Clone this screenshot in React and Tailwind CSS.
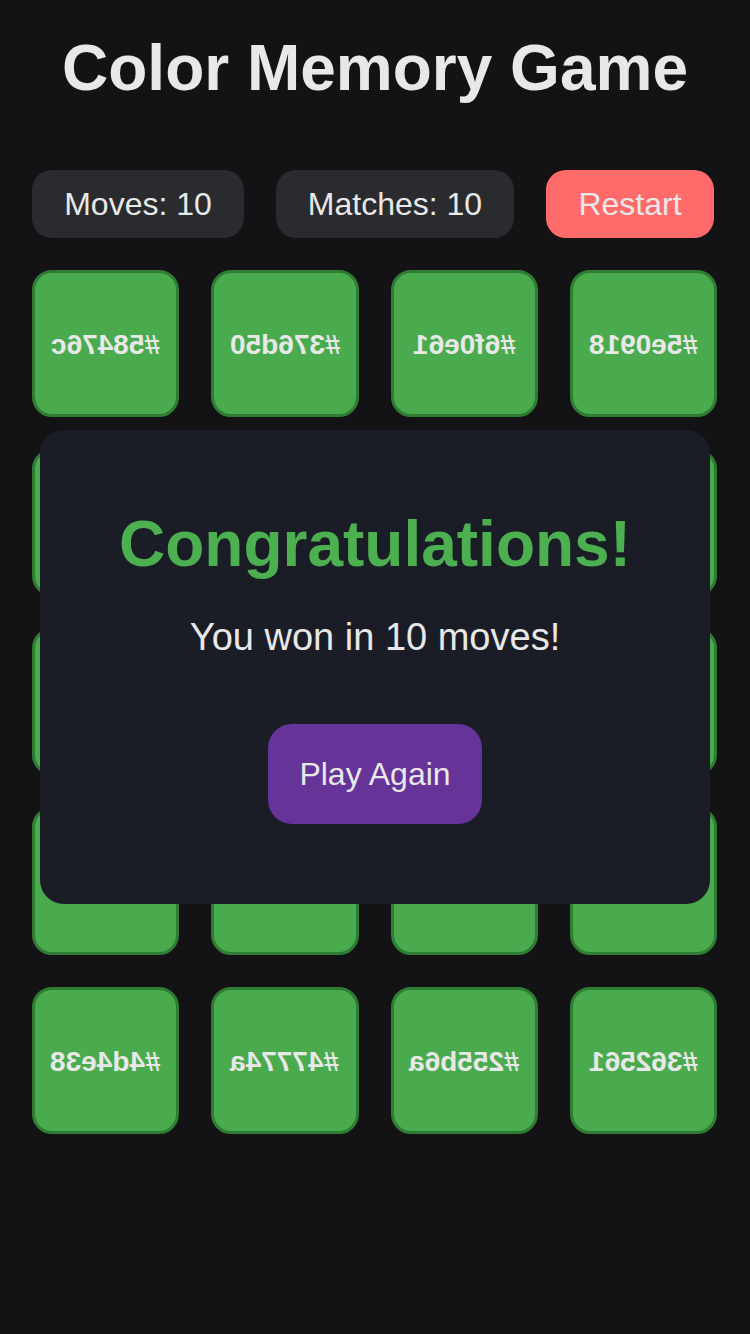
import React from 'react';

// rows 2-4 sit under the win modal, their faces are not visible
const cards = [
    '#58476c', '#376d50', '#6f0e61', '#5e0918',
    '', '', '', '',
    '', '', '', '',
    '', '', '', '',
    '#4d4e38', '#47774a', '#255b6a', '#362561',
];

const Card = ({ label }) => (
    <div className="aspect-square rounded-[20px] bg-[#4aab4e] border-[3px] border-[#2f7d33] flex items-center justify-center">
        {label && <span className="mt-[3px] text-[28px] font-bold text-[#e8e8e8] -scale-x-100">{label}</span>}
    </div>
);

const App = () => {
    return (
        <div className="min-h-screen bg-[#131316] text-[#e8e8e8] font-['Liberation_Sans',Arial,sans-serif] flex flex-col">
            {/* Title */}
            <h1 className="pt-[32px] text-center text-[64px] font-bold leading-[1.15]">Color Memory Game</h1>

            {/* Stats */}
            <div className="mt-[64px] px-8 flex gap-8">
                <div className="w-[212px] h-[68px] rounded-[20px] bg-[#2a2b2e] flex items-center justify-center text-[32px]">Moves: 10</div>
                <div className="w-[238px] h-[68px] rounded-[20px] bg-[#2a2b2e] flex items-center justify-center text-[32px]">Matches: 10</div>
                <button className="w-[168px] h-[68px] rounded-[20px] bg-[#ff6b6b] flex items-center justify-center text-[32px] text-[#e8e8e8]">Restart</button>
            </div>

            {/* Board */}
            <div className="mt-8 mx-8 w-[685px] grid grid-cols-4 gap-8">
                {cards.map((c, i) => (
                    <Card key={i} label={c} />
                ))}
            </div>

            {/* Win modal */}
            <div className="fixed inset-0 flex items-center justify-center">
                <div className="w-[670px] h-[474px] rounded-[24px] bg-[#1b1d26] flex flex-col items-center pt-[78px]">
                    <h2 className="text-[64px] font-bold text-[#4caf50] leading-[1.15]">Congratulations!</h2>
                    <p className="mt-[34px] text-[38px] leading-[1.15]">You won in 10 moves!</p>
                    <button className="mt-[65px] w-[214px] h-[100px] rounded-[24px] bg-[#663399] text-[32px] text-[#e8e8e8] flex items-center justify-center">Play Again</button>
                </div>
            </div>
        </div>
    );
};

export default App;
